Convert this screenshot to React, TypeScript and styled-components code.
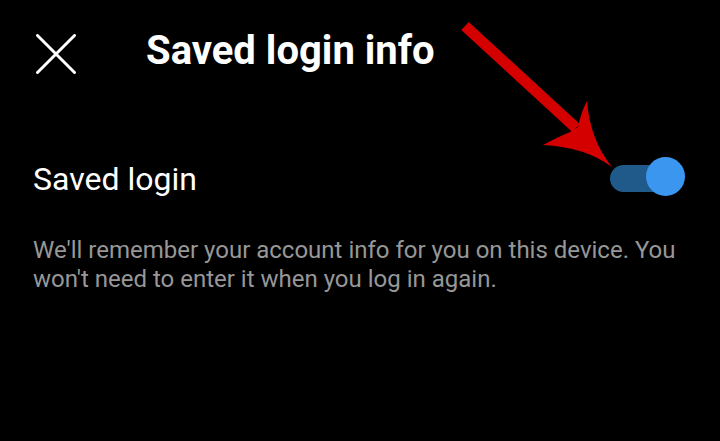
import React from "react";
import styled, { createGlobalStyle } from "styled-components";

const Global = createGlobalStyle`
  html, body { margin: 0; padding: 0; background: #000; }
  body { font-family: Roboto, "Noto Sans", sans-serif; }
`;

const Screen = styled.div`
  position: relative;
  width: 720px;
  height: 441px;
  background: #000;
  overflow: hidden;
  color: #fff;
`;

const Header = styled.header`
  display: flex;
  align-items: center;
  height: 40px;
  padding: 34px 0 0 36px;
  gap: 70px;
`;

const CloseButton = styled.button`
  width: 40px;
  height: 40px;
  padding: 0;
  border: 0;
  background: none;
  display: flex;
  align-items: center;
  justify-content: center;
  cursor: pointer;
`;

const Title = styled.h1`
  margin: 0;
  padding-bottom: 7px;
  font-size: 40px;
  font-weight: 700;
  line-height: 32px;
  color: #fff;
`;

const SettingRow = styled.div`
  display: flex;
  align-items: center;
  justify-content: space-between;
  margin-top: 83px;
  padding: 0 35px 0 33px;
`;

const SettingLabel = styled.span`
  padding-top: 6px;
  font-size: 32px;
  line-height: 32px;
  color: #fff;
`;

const Toggle = styled.div<{ $on: boolean }>`
  position: relative;
  width: 75px;
  height: 38px;
`;

const Track = styled.div`
  position: absolute;
  left: 0;
  top: 8px;
  width: 60px;
  height: 27px;
  border-radius: 14px;
  background: #1f5a8a;
`;

const Knob = styled.div`
  position: absolute;
  right: 0;
  top: 0;
  width: 39px;
  height: 39px;
  border-radius: 50%;
  background: #3a96ee;
`;

const Description = styled.p`
  margin: 41px 0 0;
  padding: 0 33px;
  font-size: 24px;
  line-height: 29px;
  color: #979797;
`;

const Arrow = styled.svg`
  position: absolute;
  left: 0;
  top: 0;
  pointer-events: none;
`;

export default function App() {
  return (
    <Screen>
      <Global />
      <Header>
        <CloseButton aria-label="Close">
          <svg width="40" height="40" viewBox="0 0 40 40">
            <path d="M1.5 1.5 L38.5 38.5 M38.5 1.5 L1.5 38.5" stroke="#fff" strokeWidth="3" strokeLinecap="round" />
          </svg>
        </CloseButton>
        <Title>Saved login info</Title>
      </Header>
      <SettingRow>
        <SettingLabel>Saved login</SettingLabel>
        <Toggle $on>
          <Track />
          <Knob />
        </Toggle>
      </SettingRow>
      <Description>
        We'll remember your account info for you on this device. You won't need to enter it when you log in again.
      </Description>
      <Arrow width="720" height="441" viewBox="0 0 720 441">
        <path d="M465 26 L576 128" stroke="#d40000" strokeWidth="11" strokeLinecap="butt" />
        <path d="M587 101 Q590 140 612 167 Q585 147 543 145 Q558 137 570 132 L578 127 Q581 112 587 101 Z" fill="#d40000" />
      </Arrow>
    </Screen>
  );
}
